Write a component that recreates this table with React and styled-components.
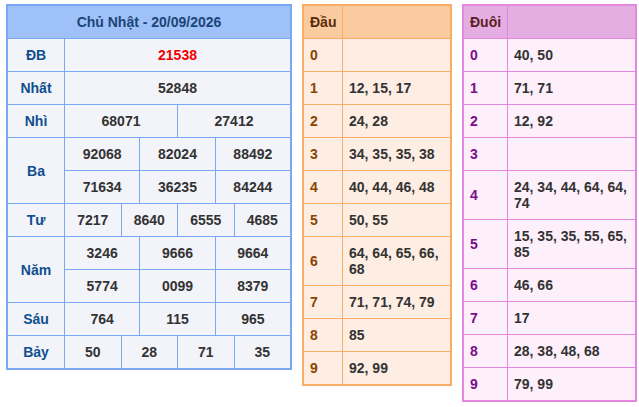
import React from "react";
import styled, { createGlobalStyle } from "styled-components";

const GlobalStyle = createGlobalStyle`
  body {
    margin: 0;
    background: #fff;
    font-family: "Liberation Sans", Arial, sans-serif;
  }
`;

const Page = styled.div`
  display: flex;
  align-items: flex-start;
  gap: 10px;
  padding: 4px 0 0 6px;
`;

const ResultGrid = styled.div`
  width: 286px;
  box-sizing: border-box;
  display: grid;
  grid-template-columns: 56px repeat(12, 1fr);
  grid-auto-rows: 32px;
  gap: 1px;
  background: #7ba8f4;
  border: 2px solid #7ba8f4;
`;

const Title = styled.div`
  grid-column: 1 / -1;
  background: #9ec1f9;
  color: #1b4576;
  font-size: 14px;
  font-weight: bold;
  display: flex;
  align-items: center;
  justify-content: center;
`;

const Label = styled.div`
  grid-column: 1;
  grid-row: span ${(p) => p.$rows || 1};
  background: #f3f4f9;
  color: #0f4f8e;
  font-size: 14px;
  font-weight: bold;
  display: flex;
  align-items: center;
  justify-content: center;
`;

const Num = styled.div`
  grid-column: span ${(p) => p.$span};
  background: #f3f4f9;
  color: ${(p) => (p.$special ? "#f00000" : "#333")};
  font-size: 14px;
  font-weight: bold;
  display: flex;
  align-items: center;
  justify-content: center;
`;

const LotoTable = styled.div`
  width: ${(p) => p.$width}px;
  box-sizing: border-box;
  display: grid;
  grid-template-columns: ${(p) => p.$keyWidth}px 1fr;
  gap: 1px;
  background: ${(p) => p.$border};
  border: 2px solid ${(p) => p.$border};
`;

const HeadCell = styled.div`
  background: ${(p) => p.$bg};
  color: ${(p) => p.$color};
  font-size: 14px;
  font-weight: bold;
  height: 32px;
  padding: 0 6px;
  display: flex;
  align-items: center;
`;

const KeyCell = styled.div`
  background: ${(p) => p.$bg};
  color: ${(p) => p.$color};
  font-size: 14px;
  font-weight: bold;
  line-height: 16px;
  padding: 8px 6px;
  display: flex;
  align-items: center;
`;

const ValueCell = styled.div`
  background: ${(p) => p.$bg};
  color: #333;
  font-size: 14px;
  font-weight: bold;
  line-height: 16px;
  padding: 8px 6px;
`;

const prizes = [
  { label: "ĐB", rows: [["21538"]], special: true },
  { label: "Nhất", rows: [["52848"]] },
  { label: "Nhì", rows: [["68071", "27412"]] },
  { label: "Ba", rows: [["92068", "82024", "88492"], ["71634", "36235", "84244"]] },
  { label: "Tư", rows: [["7217", "8640", "6555", "4685"]] },
  { label: "Năm", rows: [["3246", "9666", "9664"], ["5774", "0099", "8379"]] },
  { label: "Sáu", rows: [["764", "115", "965"]] },
  { label: "Bảy", rows: [["50", "28", "71", "35"]] },
];

const dau = ["", "12, 15, 17", "24, 28", "34, 35, 35, 38", "40, 44, 46, 48", "50, 55", "64, 64, 65, 66, 68", "71, 71, 74, 79", "85", "92, 99"];
const duoi = ["40, 50", "71, 71", "12, 92", "", "24, 34, 44, 64, 64, 74", "15, 35, 35, 55, 65, 85", "46, 66", "17", "28, 38, 48, 68", "79, 99"];

function Loto({ title, items, width, keyWidth, theme }) {
  return (
    <LotoTable $width={width} $keyWidth={keyWidth} $border={theme.border}>
      <HeadCell $bg={theme.head} $color={theme.headText}>{title}</HeadCell>
      <HeadCell $bg={theme.head} />
      {items.map((v, i) => (
        <React.Fragment key={i}>
          <KeyCell $bg={theme.cell} $color={theme.key}>{i}</KeyCell>
          <ValueCell $bg={theme.cell}>{v}</ValueCell>
        </React.Fragment>
      ))}
    </LotoTable>
  );
}

const orange = { border: "#f9ad66", head: "#f9cb9f", cell: "#fdede2", headText: "#5a2b0a", key: "#8b4500" };
const pink = { border: "#e488dd", head: "#e4aee3", cell: "#fdf0fb", headText: "#5a1e1e", key: "#7a0c8c" };

export default function App() {
  return (
    <>
      <GlobalStyle />
      <Page>
        <ResultGrid>
          <Title>Chủ Nhật - 20/09/2026</Title>
          {prizes.map((p) => (
            <React.Fragment key={p.label}>
              <Label $rows={p.rows.length}>{p.label}</Label>
              {p.rows.map((row, ri) =>
                row.map((n, ni) => (
                  <Num key={ri + "-" + ni} $span={12 / row.length} $special={p.special}>
                    {n}
                  </Num>
                ))
              )}
            </React.Fragment>
          ))}
        </ResultGrid>
        <Loto title="Đầu" items={dau} width={150} keyWidth={38} theme={orange} />
        <Loto title="Đuôi" items={duoi} width={175} keyWidth={43} theme={pink} />
      </Page>
    </>
  );
}
